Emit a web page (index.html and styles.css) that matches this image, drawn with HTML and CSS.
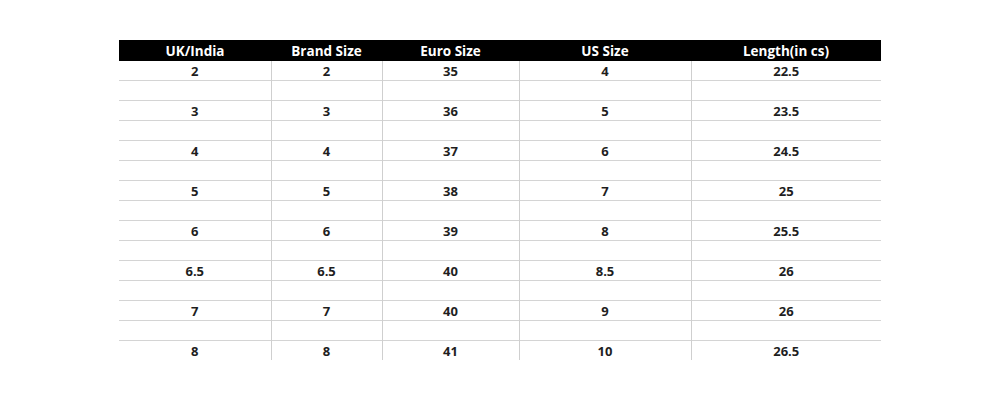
FILE: index.html
```html
<!DOCTYPE html>
<html>
<head>
<meta charset="utf-8">
<link rel="stylesheet" href="styles.css">
</head>
<body>
<div class="page">
<table class="sizes">
  <colgroup>
    <col class="c1"><col class="c2"><col class="c3"><col class="c4"><col class="c5">
  </colgroup>
  <thead>
    <tr><th>UK/India</th><th>Brand Size</th><th>Euro Size</th><th>US Size</th><th>Length(in cs)</th></tr>
  </thead>
  <tbody>
    <tr><td>2</td><td>2</td><td>35</td><td>4</td><td>22.5</td></tr>
    <tr class="gap"><td></td><td></td><td></td><td></td><td></td></tr>
    <tr><td>3</td><td>3</td><td>36</td><td>5</td><td>23.5</td></tr>
    <tr class="gap"><td></td><td></td><td></td><td></td><td></td></tr>
    <tr><td>4</td><td>4</td><td>37</td><td>6</td><td>24.5</td></tr>
    <tr class="gap"><td></td><td></td><td></td><td></td><td></td></tr>
    <tr><td>5</td><td>5</td><td>38</td><td>7</td><td>25</td></tr>
    <tr class="gap"><td></td><td></td><td></td><td></td><td></td></tr>
    <tr><td>6</td><td>6</td><td>39</td><td>8</td><td>25.5</td></tr>
    <tr class="gap"><td></td><td></td><td></td><td></td><td></td></tr>
    <tr><td>6.5</td><td>6.5</td><td>40</td><td>8.5</td><td>26</td></tr>
    <tr class="gap"><td></td><td></td><td></td><td></td><td></td></tr>
    <tr><td>7</td><td>7</td><td>40</td><td>9</td><td>26</td></tr>
    <tr class="gap"><td></td><td></td><td></td><td></td><td></td></tr>
    <tr><td>8</td><td>8</td><td>41</td><td>10</td><td>26.5</td></tr>
  </tbody>
</table>
</div>
</body>
</html>
```

FILE: styles.css
```css
html, body {
  margin: 0;
  padding: 0;
  background: #ffffff;
}
.page {
  width: 1000px;
  height: 400px;
  padding-top: 40px;
  box-sizing: border-box;
  display: flex;
  justify-content: center;
  align-items: flex-start;
}
.sizes {
  border-collapse: collapse;
  table-layout: fixed;
  width: 762px;
  font-family: "Open Sans", "Liberation Sans", sans-serif;
  font-weight: 700;
  font-size: 13px;
  color: #1e1e1e;
}
.c1 { width: 152px; }
.c2 { width: 111px; }
.c3 { width: 137px; }
.c4 { width: 172px; }
.c5 { width: 190px; }
.sizes th {
  background: #000000;
  color: #ffffff;
  height: 20px;
  padding: 1px 0 0 0;
  text-align: center;
  font-weight: 700;
  font-size: 13.5px;
  line-height: 20px;
}
.sizes td {
  height: 18px;
  padding: 1px 0 0 0;
  text-align: center;
  line-height: 18px;
  border-left: 1px solid #cfcfcf;
  border-top: 1px solid #d4d4d4;
}
.sizes td:first-child {
  border-left: none;
}
.sizes tbody tr:first-child td {
  border-top: none;
}
```
